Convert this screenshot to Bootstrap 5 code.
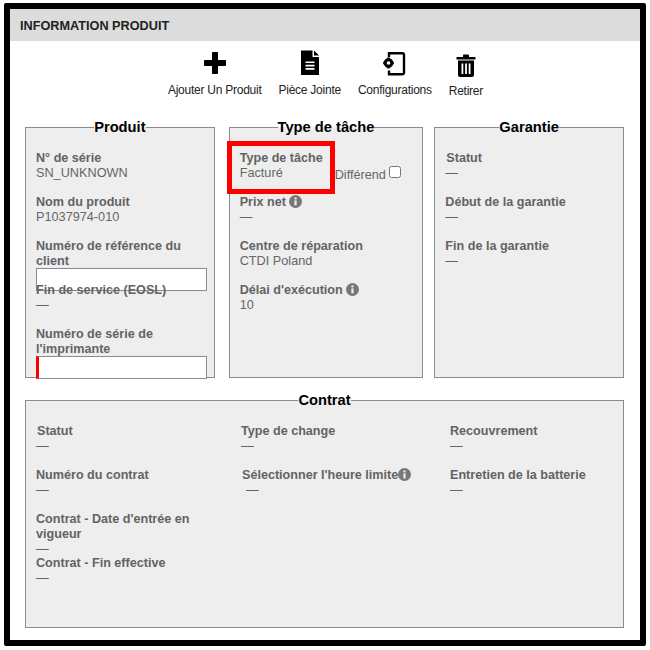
<!DOCTYPE html>
<html lang="fr">
<head>
<meta charset="utf-8">
<title>Information produit</title>
<link href="https://cdn.jsdelivr.net/npm/bootstrap@5.3.0/dist/css/bootstrap.min.css" rel="stylesheet">
<style>
html,body{background:#fff;margin:0;padding:0}
body{font-family:"Liberation Sans",Arial,sans-serif;font-size:12.7px;line-height:15px;color:#666}
.frame{width:642px;height:643px;margin:3px 0 0 4px;border:6px solid #000;border-radius:2px;background:#fff;box-sizing:border-box}
.head-bar{height:32px;background:#dcdcdc;padding-left:10px;font-weight:700;font-size:12.7px;line-height:34px;color:#222}
.tool-row{height:78px;padding:9px 0 0 1px;gap:17px;color:#222}
.tool-item{font-size:12px;line-height:14px;letter-spacing:-.25px;text-align:center;white-space:nowrap}
.tool-icon{height:26px;margin-bottom:7px}
.tool-icon svg{display:block;margin:0 auto;overflow:visible}
.tool-low{padding-top:1px}
.panels{padding:0 16px 0 15px}
.pane{border:1px solid #8a8a92;background:#eee;position:relative;padding:0 10px;box-sizing:border-box}
.pane legend{float:none;width:auto;margin:0 auto;padding:0;font-size:14.7px;line-height:16px;font-weight:700;color:#000}
.pane-top{height:259px}
.w-a{width:190px}
.w-b{width:195px;margin-left:14px}
.w-c{width:190px;margin-left:11px}
.pane-wide{height:236px;margin-top:14px}
.fld{height:44px;font-size:12.7px}
.fld-first{margin-top:16px}
.fld b{display:block;font-weight:700;font-size:12.6px;color:#636363}
.fld b.lab-in{padding-left:1px}
.fld span.val{display:block}
.fld input.txt{display:block;width:171px;height:23px;border:1px solid #8a8a92;background:#fff;padding:0;margin:-1px 0 0;border-radius:0}
.fld input.req{border-left:3px solid #f00}
.info{display:inline-block;vertical-align:-2px}
.ann{position:absolute;left:-3px;top:6px;width:108px;height:53px;border:5px solid #f00;pointer-events:none}
.dif{position:absolute;left:105px;top:31px;line-height:15px;white-space:nowrap}
.dif input{width:12px;height:12px;margin:0 0 0 3px;vertical-align:1px}
.cols{display:grid;grid-template-columns:205px 209px 1fr}
.col-lim{max-width:185px}
.nudge{padding-left:1px}
.nudge-val{padding-left:4px}
</style>
</head>
<body>
<div class="frame">
  <div class="head-bar">INFORMATION PRODUIT</div>
  <div class="tool-row d-flex justify-content-center align-items-start">
    <div class="tool-item">
      <div class="tool-icon"><svg width="22" height="26" viewBox="0 0 22 26"><path d="M8 3a1 1 0 0 1 1-1h4a1 1 0 0 1 1 1v7h7a1 1 0 0 1 1 1v4a1 1 0 0 1-1 1h-7v7a1 1 0 0 1-1 1h-4a1 1 0 0 1-1-1v-7h-7a1 1 0 0 1-1-1v-4a1 1 0 0 1 1-1h7z" fill="#000"/></svg></div>
      Ajouter Un Produit
    </div>
    <div class="tool-item">
      <div class="tool-icon"><svg width="20" height="26" viewBox="0 0 20 26"><path d="M1 .5h11.500v6.500h6.500v18h-18z" fill="#000"/><path d="M14 .5l5 5h-5z" fill="#000"/><path d="M5.500 11.500h9v1.600h-9zM5.500 14.800h9v1.600h-9zM5.500 18.100h9v1.600h-9z" fill="#fff"/></svg></div>
      Pièce Jointe
    </div>
    <div class="tool-item">
      <div class="tool-icon"><svg width="24" height="26" viewBox="0 0 24 26"><path d="M6 7v-3.800h13.500a1.500 1.500 0 0 1 1.500 1.500v18.100a1.500 1.500 0 0 1-1.500 1.500h-13.500v-3.800" fill="none" stroke="#000" stroke-width="2.400"/><circle cx="5.500" cy="13" r="3.300" fill="none" stroke="#000" stroke-width="3"/><path d="M4.200 7.600h2.600v2h-2.600zM4.200 16.400h2.600v2h-2.600zM.2 11.700h2v2.600h-2zM8.800 11.700h2v2.600h-2z" fill="#000"/></svg></div>
      Configurations
    </div>
    <div class="tool-item tool-low">
      <div class="tool-icon"><svg width="20" height="26" viewBox="0 0 20 26"><g transform="translate(0 1)"><path d="M7 5v-1.500a1 1 0 0 1 1-1h4a1 1 0 0 1 1 1v1.500h6.500v2.500h-19v-2.500z" fill="#000"/><path d="M2 8.500h16v14.500a2 2 0 0 1-2 2h-12a2 2 0 0 1-2-2z" fill="#000"/><path d="M5.500 11.500h1.800v10.500h-1.800zM9.100 11.500h1.800v10.500h-1.800zM12.700 11.500h1.800v10.500h-1.800z" fill="#fff"/></g></svg></div>
      Retirer
    </div>
  </div>
  <div class="panels">
    <div class="d-flex">
      <fieldset class="pane pane-top w-a">
        <legend>Produit</legend>
        <div class="fld fld-first"><b>N° de série</b><span class="val">SN_UNKNOWN</span></div>
        <div class="fld"><b>Nom du produit</b><span class="val">P1037974-010</span></div>
        <div class="fld"><b>Numéro de référence du client</b><input class="txt" type="text" aria-label="Numéro de référence du client"></div>
        <div class="fld"><b>Fin de service (EOSL)</b><span class="val">—</span></div>
        <div class="fld"><b>Numéro de série de l'imprimante</b><input class="txt req" type="text" aria-label="Numéro de série de l'imprimante"></div>
      </fieldset>
      <fieldset class="pane pane-top w-b">
        <legend>Type de tâche</legend>
        <div class="fld fld-first"><b>Type de tâche</b><span class="val">Facturé</span></div>
        <div class="fld"><b>Prix net <svg class="info" width="13" height="13" viewBox="0 0 13 13"><circle cx="6.500" cy="6.500" r="6.500" fill="#777"/><rect x="5.400" y="5.400" width="2.200" height="5" fill="#eee"/><rect x="5.400" y="2.400" width="2.200" height="2" fill="#eee"/></svg></b><span class="val">—</span></div>
        <div class="fld"><b>Centre de réparation</b><span class="val">CTDI Poland</span></div>
        <div class="fld"><b>Délai d'exécution <svg class="info" width="13" height="13" viewBox="0 0 13 13"><circle cx="6.500" cy="6.500" r="6.500" fill="#777"/><rect x="5.400" y="5.400" width="2.200" height="5" fill="#eee"/><rect x="5.400" y="2.400" width="2.200" height="2" fill="#eee"/></svg></b><span class="val">10</span></div>
        <div class="dif">Différend<input type="checkbox" aria-label="Différend"></div>
        <div class="ann"></div>
      </fieldset>
      <fieldset class="pane pane-top w-c">
        <legend>Garantie</legend>
        <div class="fld fld-first"><b class="lab-in">Statut</b><span class="val">—</span></div>
        <div class="fld"><b>Début de la garantie</b><span class="val">—</span></div>
        <div class="fld"><b>Fin de la garantie</b><span class="val">—</span></div>
      </fieldset>
    </div>
    <fieldset class="pane pane-wide">
      <legend>Contrat</legend>
      <div class="cols">
        <div class="col-lim">
          <div class="fld fld-first"><b class="lab-in">Statut</b><span class="val">—</span></div>
          <div class="fld"><b>Numéro du contrat</b><span class="val">—</span></div>
          <div class="fld"><b>Contrat - Date d'entrée en vigueur</b><span class="val">—</span></div>
          <div class="fld"><b>Contrat - Fin effective</b><span class="val">—</span></div>
        </div>
        <div>
          <div class="fld fld-first"><b>Type de change</b><span class="val">—</span></div>
          <div class="fld nudge"><b>Sélectionner l'heure limite<svg class="info" width="13" height="13" viewBox="0 0 13 13"><circle cx="6.500" cy="6.500" r="6.500" fill="#777"/><rect x="5.400" y="5.400" width="2.200" height="5" fill="#eee"/><rect x="5.400" y="2.400" width="2.200" height="2" fill="#eee"/></svg></b><span class="val nudge-val">—</span></div>
        </div>
        <div>
          <div class="fld fld-first"><b>Recouvrement</b><span class="val">—</span></div>
          <div class="fld"><b>Entretien de la batterie</b><span class="val">—</span></div>
        </div>
      </div>
    </fieldset>
  </div>
</div>
</body>
</html>
